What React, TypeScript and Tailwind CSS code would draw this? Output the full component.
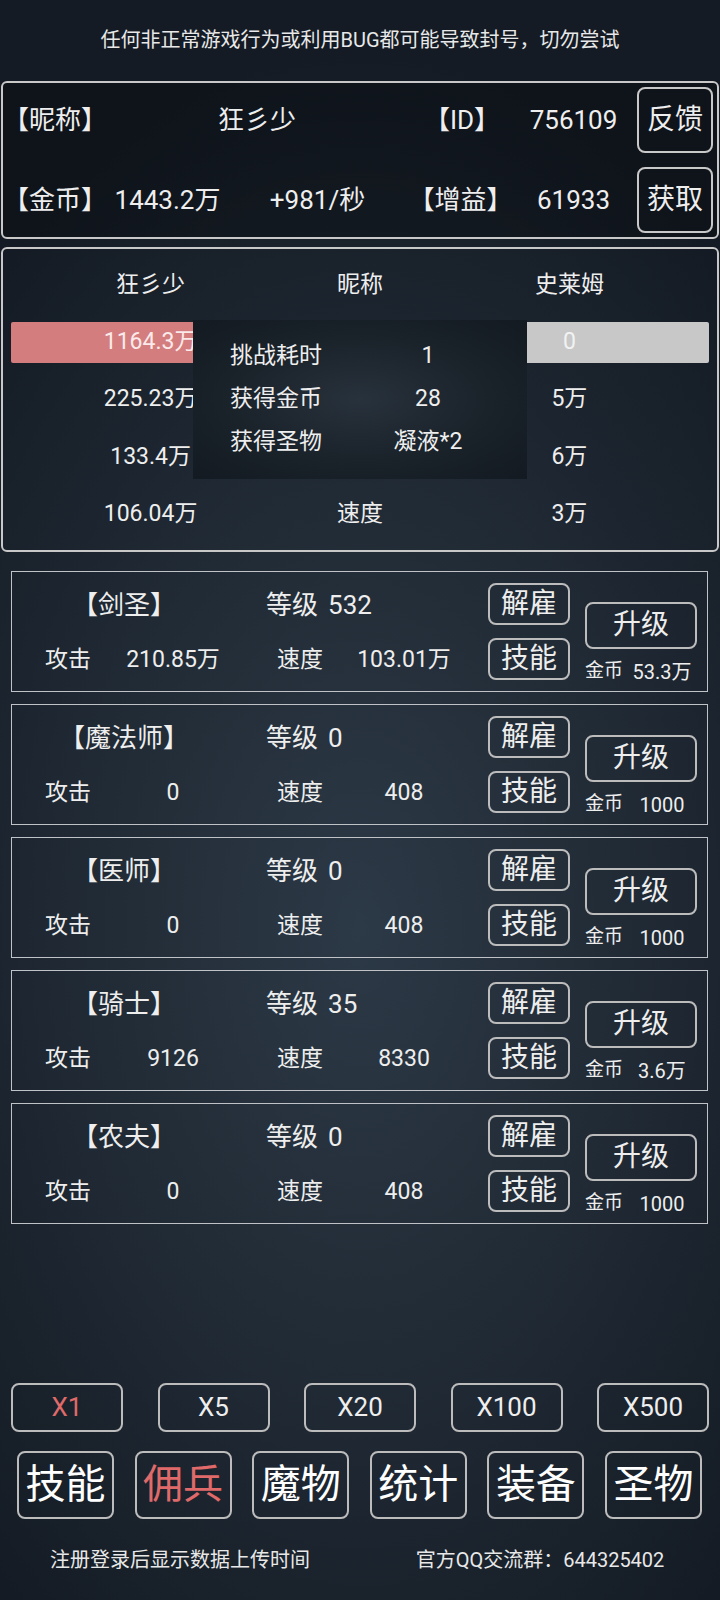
import React from 'react';

const FONT = { fontFamily: 'Roboto, "Noto Sans CJK SC", sans-serif' };

interface Hero {
  name: string;
  level: string;
  attack: string;
  speed: string;
  cost: string;
}

const HEROES: Hero[] = [
  { name: '【剑圣】', level: '532', attack: '210.85万', speed: '103.01万', cost: '53.3万' },
  { name: '【魔法师】', level: '0', attack: '0', speed: '408', cost: '1000' },
  { name: '【医师】', level: '0', attack: '0', speed: '408', cost: '1000' },
  { name: '【骑士】', level: '35', attack: '9126', speed: '8330', cost: '3.6万' },
  { name: '【农夫】', level: '0', attack: '0', speed: '408', cost: '1000' },
];

const MULTIPLIERS = ['X1', 'X5', 'X20', 'X100', 'X500'];
const TABS = ['技能', '佣兵', '魔物', '统计', '装备', '圣物'];

// left / middle / right columns of the battle panel, weights 2:1:2
const BATTLE_ROWS = [
  { left: '225.23万', mid: '攻击', right: '5万' },
  { left: '133.4万', mid: '防御', right: '6万' },
  { left: '106.04万', mid: '速度', right: '3万' },
];

function HeroCard({ hero }: { hero: Hero }) {
  return (
    <div className="flex h-[121px] border-[1.5px] border-[#bfc3c7]">
      {/* stats */}
      <div className="flex w-[476px] flex-col gap-[15px] pt-[13px]">
        <div className="flex h-[40px] items-center text-[26px]">
          <span className="w-[224px] text-center">{hero.name}</span>
          <span className="ml-[30px]">等级</span>
          <span className="ml-[10px]">{hero.level}</span>
        </div>
        <div className="flex h-[40px] items-center whitespace-nowrap text-[23px]">
          <span className="ml-[16px] w-[80px] text-center">攻击</span>
          <span className="ml-[5px] w-[120px] text-center">{hero.attack}</span>
          <span className="ml-[27px] w-[80px] text-center">速度</span>
          <span className="ml-[4px] w-[120px] text-center">{hero.speed}</span>
        </div>
      </div>

      {/* dismiss / skills */}
      <div className="flex w-[82px] flex-col gap-[13px] pt-[10.5px]">
        <button className="flex h-[42px] items-center justify-center rounded-[8px] border-2 border-[#bcbcbc] text-[28px] leading-none">
          解雇
        </button>
        <button className="flex h-[42px] items-center justify-center rounded-[8px] border-2 border-[#bcbcbc] text-[28px] leading-none">
          技能
        </button>
      </div>

      {/* upgrade */}
      <div className="ml-[15px] flex w-[112px] flex-col pt-[29.5px]">
        <button className="flex h-[47px] items-center justify-center rounded-[8px] border-2 border-[#bcbcbc] text-[28px] leading-none">
          升级
        </button>
        <div className="mt-[11px] flex h-[24px] items-center whitespace-nowrap">
          <span className="w-[38px] text-center text-[19px]">金币</span>
          <span className="ml-[5px] w-[68px] text-center text-[20px]">{hero.cost}</span>
        </div>
      </div>
    </div>
  );
}

export default function App() {
  return (
    <div
      style={FONT}
      className="h-[1600px] w-full overflow-hidden bg-[radial-gradient(ellipse_75%_55%_at_50%_58%,#2c3946_0%,#222c37_45%,#141b24_100%)] text-[#eeeeee]"
    >
      {/* warning */}
      <div className="flex h-[80px] items-center justify-center text-[20px] text-[#e8e8e8]">
        任何非正常游戏行为或利用BUG都可能导致封号，切勿尝试
      </div>

      {/* player info */}
      <div className="mx-[1px] mt-[1px] flex h-[158px] flex-col gap-[14px] rounded-[6px] border-2 border-[#c8c8c8] bg-black/25 pt-[4px]">
        <div className="flex h-[66px] items-center whitespace-nowrap text-[26px]">
          <span className="w-[100px]">【昵称】</span>
          <span className="w-[308px] text-center">狂彡少</span>
          <span className="w-[102px] text-center">【ID】</span>
          <span className="w-[121px] text-center">756109</span>
          <button className="ml-[3px] flex h-[66px] w-[76px] items-center justify-center rounded-[8px] border-2 border-[#c8c8c8] text-[28px] leading-none">
            反馈
          </button>
        </div>
        <div className="flex h-[66px] items-center whitespace-nowrap text-[26px]">
          <span className="w-[105px]">【金币】</span>
          <span className="w-[119px] text-center">1443.2万</span>
          <span className="w-[181px] text-center">+981/秒</span>
          <span className="w-[105px] text-center">【增益】</span>
          <span className="w-[121px] text-center">61933</span>
          <button className="ml-[3px] flex h-[66px] w-[76px] items-center justify-center rounded-[8px] border-2 border-[#c8c8c8] text-[28px] leading-none">
            获取
          </button>
        </div>
      </div>

      {/* battle */}
      <div className="relative mx-[1px] mt-[8px] h-[305px] rounded-[6px] border-2 border-[#c8c8c8] px-[8px] pt-[15px] text-[23px]">
        <div className="grid h-[42px] grid-cols-[2fr_1fr_2fr] items-center text-center">
          <span>狂彡少</span>
          <span>昵称</span>
          <span>史莱姆</span>
        </div>
        <div className="mt-[16px] grid h-[41px] grid-cols-[2fr_1fr_2fr] items-center text-center">
          <div className="flex h-full items-center justify-center rounded-[2px] bg-[#d47d7f] text-[#fbeaea]">1164.3万</div>
          <span>生命</span>
          <div className="flex h-full items-center justify-center rounded-[2px] bg-[#c8c8c8] text-[#f2f2f2]">0</div>
        </div>
        {BATTLE_ROWS.map((row, i) => (
          <div
            key={row.mid}
            className={`grid h-[41px] grid-cols-[2fr_1fr_2fr] items-center text-center ${i === 1 ? 'mt-[17px]' : 'mt-[16px]'}`}
          >
            <span>{row.left}</span>
            <span>{row.mid}</span>
            <span>{row.right}</span>
          </div>
        ))}

        {/* result popup */}
        <div className="absolute left-[190px] top-[71px] h-[159px] w-[334px] bg-[radial-gradient(ellipse_at_center,#28323c_0%,#1a222a_55%,#131a21_100%)] pt-[15px]">
          {[
            ['挑战耗时', '1'],
            ['获得金币', '28'],
            ['获得圣物', '凝液*2'],
          ].map(([label, value]) => (
            <div key={label} className="flex h-[43px] items-center whitespace-nowrap">
              <span className="w-[157px] pl-[37px]">{label}</span>
              <span className="w-[156px] text-center">{value}</span>
            </div>
          ))}
        </div>
      </div>

      {/* hired heroes */}
      <div className="mx-[11px] mt-[19px] flex w-[697px] flex-col gap-[12px]">
        {HEROES.map((h) => (
          <HeroCard key={h.name} hero={h} />
        ))}
      </div>

      {/* multiplier */}
      <div className="mt-[159px] flex justify-between px-[11px]">
        {MULTIPLIERS.map((m, i) => (
          <button
            key={m}
            className={`flex h-[49px] w-[112px] items-center justify-center rounded-[8px] border-2 border-[#bcbcbc] text-[26px] ${
              i === 0 ? 'text-[#e06a6a]' : 'text-[#eeeeee]'
            }`}
          >
            {m}
          </button>
        ))}
      </div>

      {/* tabs */}
      <div className="mt-[19px] flex justify-between pl-[17px] pr-[18px]">
        {TABS.map((t) => (
          <button
            key={t}
            className={`flex h-[68px] w-[97px] items-center justify-center rounded-[8px] border-2 border-[#bcbcbc] text-[40px] leading-none ${
              t === '佣兵' ? 'text-[#e06a6a]' : 'text-white'
            }`}
          >
            {t}
          </button>
        ))}
      </div>

      {/* footer */}
      <div className="mt-[26px] flex h-[30px] items-center text-[20px] text-[#e8e8e8]">
        <span className="w-[360px] text-center">注册登录后显示数据上传时间</span>
        <span className="w-[360px] text-center">官方QQ交流群：644325402</span>
      </div>
    </div>
  );
}
